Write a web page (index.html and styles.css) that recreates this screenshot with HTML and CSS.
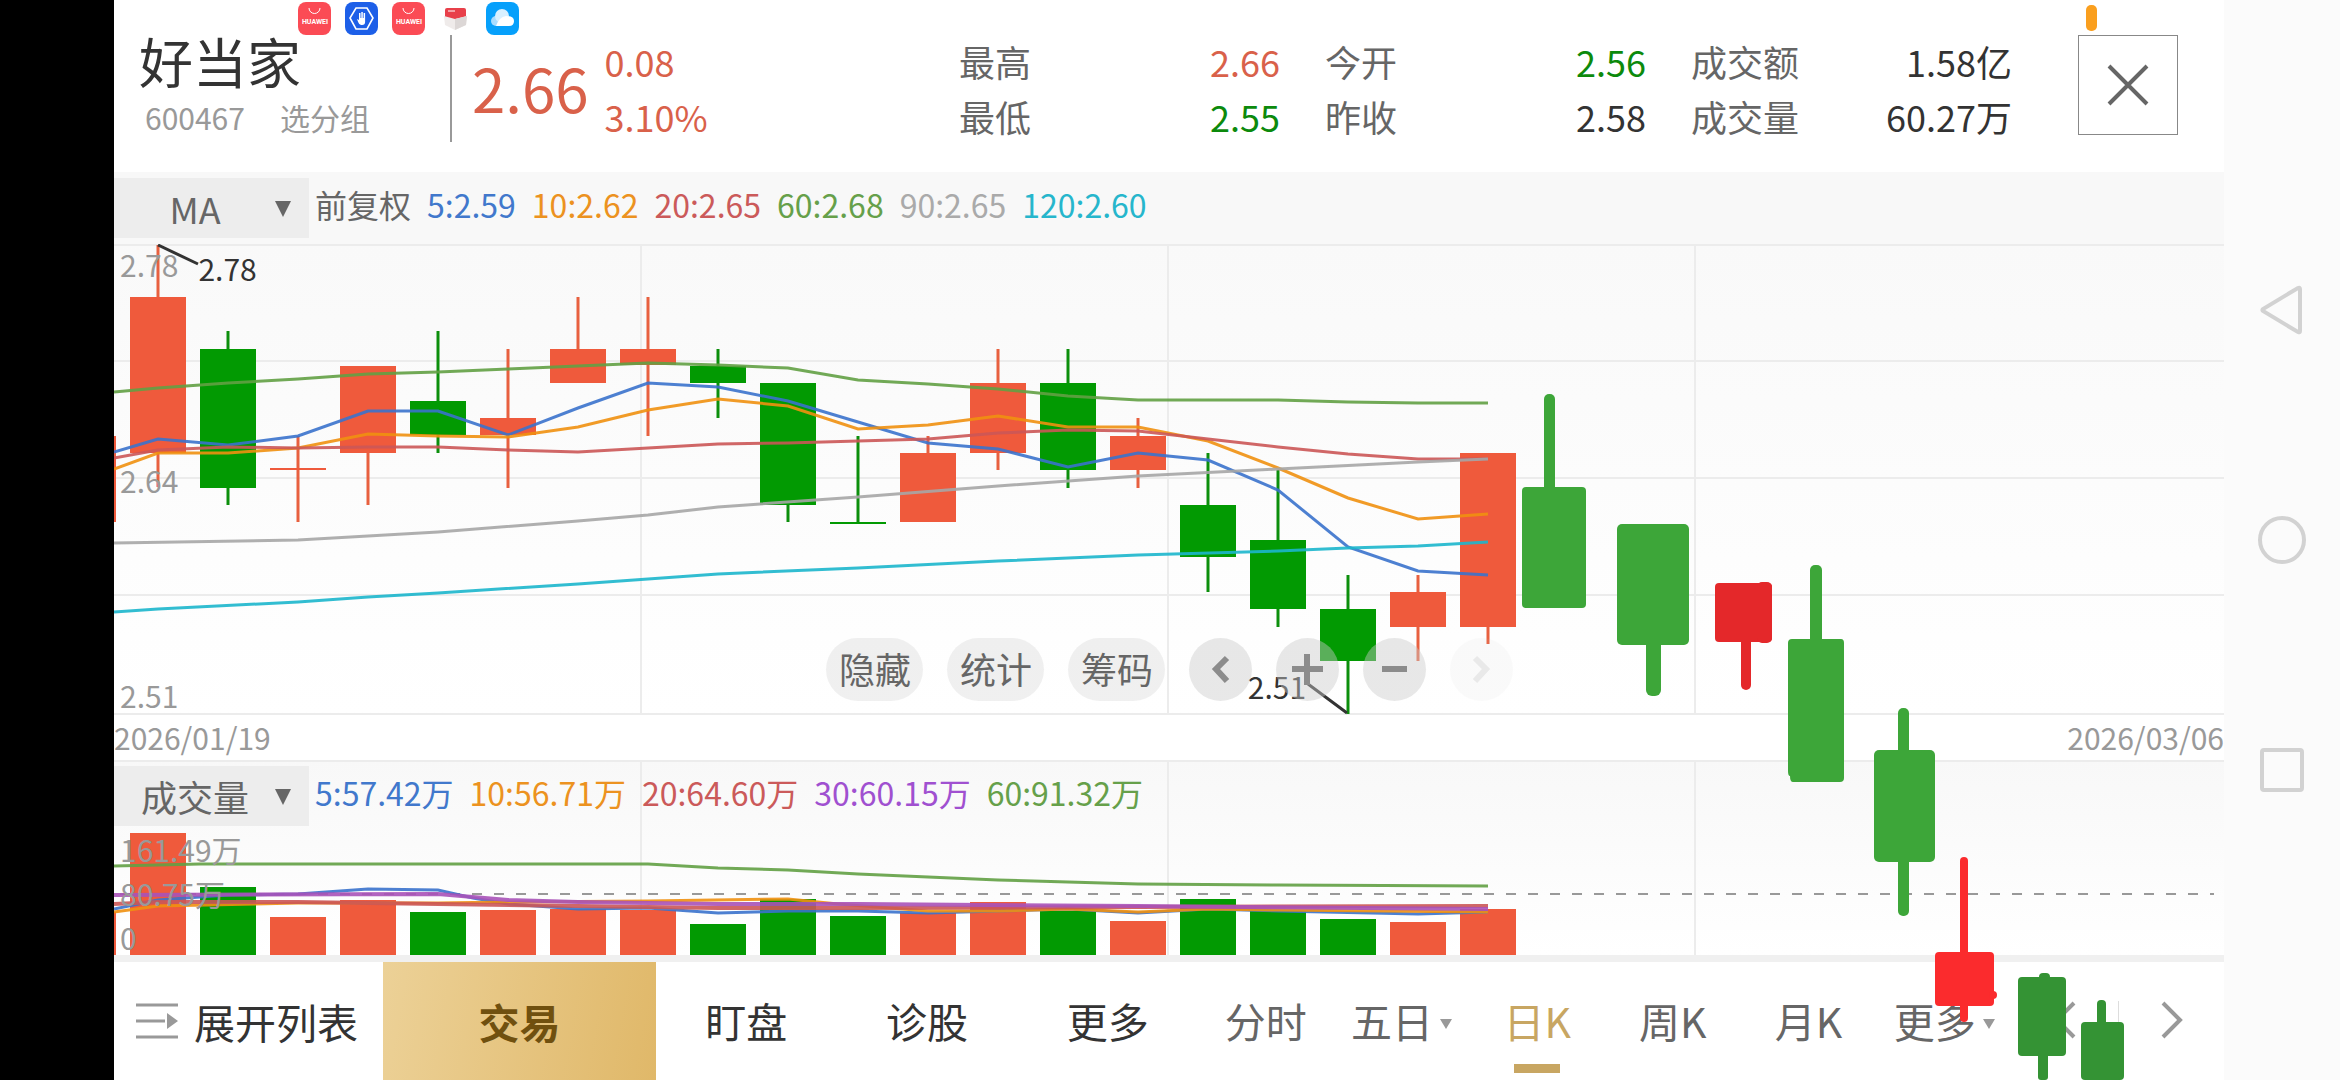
FILE: index.html
```html
<!DOCTYPE html>
<html lang="zh-CN">
<head>
    <meta charset="UTF-8">
    <meta name="viewport" content="width=device-width, initial-scale=1.0">
    <title>好当家 600467 - 日K</title>
    <link rel="stylesheet" href="styles.css">
</head>
<body>
    <div class="notch"></div>

    <main class="app">
        <!-- notificaciones del sistema -->
        <div class="status">
            <svg class="app-icon" viewBox="0 0 33 33">
                <rect width="33" height="33" rx="8" fill="#fb4b55"/>
                <path d="M11 6a5 5 0 0 0 11 0" fill="none" stroke="#fff" stroke-width="1"/>
                <text x="17" y="22" class="brand">HUAWEI</text>
            </svg>
            <svg class="app-icon" viewBox="0 0 33 33">
                <rect width="33" height="33" rx="8" fill="#1d5fe8"/>
                <path d="M11 6h11l6 10-6 11H11L5 16z" fill="none" stroke="#fff" stroke-width="1.6"/>
                <path d="M12 17l2 1v-7h1.500v5h.8v-6h1.500v6h.8v-5h1.500v9q0 3-3 3h-1q-2 0-3-3z" fill="#fff"/>
            </svg>
            <svg class="app-icon" viewBox="0 0 33 33">
                <rect width="33" height="33" rx="8" fill="#fb4b55"/>
                <path d="M11 6a5 5 0 0 0 11 0" fill="none" stroke="#fff" stroke-width="1"/>
                <text x="17" y="22" class="brand">HUAWEI</text>
            </svg>
            <svg class="app-icon" viewBox="0 0 33 33">
                <path d="M6 8q0-2 2-2h17q2 0 2 2v9H6z" fill="#e8404a"/>
                <path d="M5 14l11 3 12-3-1 9-11 5-10-5z" fill="#efebea"/>
                <path d="M16 17l12-3-1 9-11 5z" fill="#dcd7d6"/>
                <path d="M9 9h7" stroke="#fff" stroke-width="1"/>
            </svg>
            <svg class="app-icon" viewBox="0 0 33 33">
                <rect width="33" height="33" rx="8" fill="#06a0fb"/>
                <circle cx="10" cy="19" r="5" fill="#a9dcff"/>
                <circle cx="16" cy="14" r="7" fill="#d8f0ff"/>
                <path d="M10 24q3-9 10-10 8 0 8 5t-5 5z" fill="#fff"/>
            </svg>
        </div>
        <span class="mic-pill"></span>

        <header class="header">
            <div class="stock">
                <h1>好当家</h1>
                <p><span>600467</span><span>选分组</span></p>
            </div>
            <div class="price">
                <strong>2.66</strong>
                <div class="change"><span>0.08</span><span>3.10%</span></div>
            </div>
            <dl class="quotes">
                <div><dt>最高</dt><dd class="up">2.66</dd></div>
                <div><dt>今开</dt><dd class="down">2.56</dd></div>
                <div><dt>成交额</dt><dd>1.58亿</dd></div>
                <div><dt>最低</dt><dd class="down">2.55</dd></div>
                <div><dt>昨收</dt><dd>2.58</dd></div>
                <div><dt>成交量</dt><dd>60.27万</dd></div>
            </dl>
            <button class="close" type="button" aria-label="关闭">
                <svg width="42" height="42" viewBox="0 0 42 42"><path d="M2 2l38 38M40 2L2 40" stroke="#666" stroke-width="4"/></svg>
            </button>
        </header>

        <section class="indicator">
            <div class="picker">
                <select aria-label="主图指标"><option>MA</option></select>
                <svg width="16" height="16" viewBox="0 0 16 16"><path d="M0 0h16L8 16z" fill="#666"/></svg>
            </div>
            <span class="adjust">前复权</span>
            <span class="blue">5:2.59</span>
            <span class="orange">10:2.62</span>
            <span class="red">20:2.65</span>
            <span class="green">60:2.68</span>
            <span class="gray">90:2.65</span>
            <span class="cyan">120:2.60</span>
        </section>

        <section class="chart">
            <svg class="plot" viewBox="114 244 2110 471" preserveAspectRatio="none">
                <path class="grid" d="M114 245h2110M114 361h2110M114 478h2110M114 595h2110M114 714h2110M641 244v470M1168 244v470M1695 244v470"/>

                <!-- velas: mechas y cuerpos -->
                <path class="wick-up" d="M158 245v242M298 436v86M368 453v52M508 349v139M578 297v52M648 297v139M928 436v20M998 349v121M1138 418v70M1418 575v86M1488 600v44"/>
                <path class="wick-down" d="M228 331v174M438 331v122M718 349v69M788 500v22M858 436v87M1068 349v139M1208 453v139M1278 470v157M1348 575v139"/>
                <path class="up-fill" d="M60 436h56v86h-56zM130 297h56v156h-56zM270 468h56v2h-56zM340 366h56v87h-56zM480 418h56v17h-56zM550 349h56v34h-56zM620 349h56v16h-56zM900 453h56v69h-56zM970 383h56v70h-56zM1110 436h56v34h-56zM1390 592h56v35h-56zM1460 453h56v174h-56z"/>
                <path class="down-fill" d="M200 349h56v139h-56zM410 401h56v34h-56zM690 366h56v17h-56zM760 383h56v122h-56zM830 522h56v2h-56zM1040 383h56v87h-56zM1180 505h56v52h-56zM1250 540h56v69h-56zM1320 609h56v52h-56z"/>

                <g class="lines">
                    <polyline class="l60" points="114,392 158,388 228,383 298,379 368,374 438,372 508,369 578,366 648,363 718,365 788,368 858,380 928,384 998,389 1068,396 1138,400 1208,400 1278,400 1348,402 1418,403 1488,403"/>
                    <polyline class="l5" points="114,452 158,439 228,445 298,436 368,411 438,411 508,435 578,408 648,383 718,387 788,401 858,422 928,443 998,449 1068,467 1138,453 1208,460 1278,490 1348,547 1418,571 1488,575"/>
                    <polyline class="l10" points="114,469 158,453 228,453 298,448 368,434 438,436 508,437 578,427 648,410 718,399 788,406 858,429 928,425 998,416 1068,427 1138,427 1208,441 1278,468 1348,498 1418,519 1488,514"/>
                    <polyline class="l20" points="114,458 158,450 228,447 298,448 368,447 438,447 508,450 578,452 648,448 718,444 788,443 858,441 928,439 998,433 1068,430 1138,431 1208,439 1278,447 1348,454 1418,459 1488,459"/>
                    <polyline class="l90" points="114,543 298,540 438,532 578,521 648,515 718,507 858,497 998,486 1138,476 1278,469 1418,462 1488,459"/>
                    <polyline class="l120" points="114,612 158,609 298,602 368,597 438,593 578,584 718,574 858,568 998,561 1138,555 1278,551 1348,548 1418,546 1488,542"/>
                </g>
                <path class="pointer" d="M158 245l40 19M1308 684l39 29"/>
            </svg>
            <span class="axis axis-top">2.78</span>
            <span class="axis axis-mid">2.64</span>
            <span class="axis axis-low">2.51</span>
            <span class="mark mark-high">2.78</span>
            <span class="mark mark-low">2.51</span>

            <div class="tools">
                <button class="pill" type="button">隐藏</button>
                <button class="pill" type="button">统计</button>
                <button class="pill" type="button">筹码</button>
                <button class="round" type="button" aria-label="左移"><svg viewBox="0 0 63 63"><path d="M38 20L27 31l11 12" class="tool-line"/></svg></button>
                <button class="round" type="button" aria-label="放大"><svg viewBox="0 0 63 63"><path d="M16 31h31M31 16v31" class="tool-line"/></svg></button>
                <button class="round" type="button" aria-label="缩小"><svg viewBox="0 0 63 63"><path d="M19 31h25" class="tool-line"/></svg></button>
                <button class="round" type="button" aria-label="右移" disabled><svg viewBox="0 0 63 63"><path d="M25 20l11 11-11 12" class="tool-line"/></svg></button>
            </div>
        </section>

        <div class="dates"><time>2026/01/19</time><time>2026/03/06</time></div>

        <section class="volume">
            <svg class="plot" viewBox="114 760 2110 195" preserveAspectRatio="none">
                <path class="grid" d="M114 761h2110M641 760v195M1168 760v195M1695 760v195"/>
                <path d="M120 894h2094" class="dashes"/>
                <path class="up-fill" d="M60 912h56v43h-56zM130 833h56v122h-56zM270 917h56v38h-56zM340 900h56v55h-56zM480 910h56v45h-56zM550 909h56v46h-56zM620 910h56v45h-56zM900 913h56v42h-56zM970 902h56v53h-56zM1110 921h56v34h-56zM1390 922h56v33h-56zM1460 909h56v46h-56z"/>
                <path class="down-fill" d="M200 887h56v68h-56zM410 912h56v43h-56zM690 924h56v31h-56zM760 899h56v56h-56zM830 916h56v39h-56zM1040 911h56v44h-56zM1180 899h56v56h-56zM1250 911h56v44h-56zM1320 919h56v36h-56z"/>
                <g class="lines">
                    <polyline class="l60" points="114,866 200,864 648,864 718,868 788,870 858,874 928,877 998,880 1068,882 1138,884 1278,885 1488,886"/>
                    <polyline class="l5" points="114,909 158,900 228,895 298,894 368,889 438,890 473,898 508,904 578,909 648,908 718,913 788,911 858,911 928,913 998,911 1068,909 1138,913 1208,909 1278,911 1418,914 1488,912"/>
                    <polyline class="l10" points="114,912 158,906 298,903 438,903 508,902 648,901 788,899 838,904 928,911 998,911 1068,909 1138,912 1208,909 1278,910 1488,912"/>
                    <polyline class="l20" points="114,904 158,902 298,902 438,904 578,906 718,908 858,908 1138,907 1488,906"/>
                    <polyline class="l30" points="114,895 438,894 508,900 578,902 718,904 858,904 1138,906 1488,909"/>
                </g>
            </svg>
            <div class="indicator vol-indicator">
                <div class="picker">
                    <select aria-label="副图指标"><option>成交量</option></select>
                    <svg width="16" height="16" viewBox="0 0 16 16"><path d="M0 0h16L8 16z" fill="#666"/></svg>
                </div>
                <span class="blue">5:57.42万</span>
                <span class="orange">10:56.71万</span>
                <span class="red">20:64.60万</span>
                <span class="purple">30:60.15万</span>
                <span class="green">60:91.32万</span>
            </div>
            <div class="vol-axis"><span>161.49万</span><span>80.75万</span><span>0</span></div>
        </section>

        <footer class="footer">
            <button class="expand" type="button">
                <svg width="42" height="36" viewBox="0 0 42 36"><path d="M0 2h42M0 18h29M0 34h42" stroke="#999" stroke-width="3"/><path d="M31 10l11 8-11 8z" fill="#999"/></svg>
                展开列表
            </button>
            <button class="trade" type="button">交易</button>
            <nav class="actions">
                <a href="#">盯盘</a>
                <a href="#">诊股</a>
                <a href="#">更多</a>
            </nav>
            <nav class="periods">
                <a href="#">分时</a>
                <a href="#">五日<i></i></a>
                <a href="#" class="active">日K</a>
                <a href="#">周K</a>
                <a href="#">月K</a>
                <a href="#">更多<i></i></a>
            </nav>
            <div class="arrows">
                <button type="button" aria-label="上一只"><svg width="24" height="38" viewBox="0 0 24 38"><path d="M21 2L4 19l17 17" class="arrow-line"/></svg></button>
                <button type="button" aria-label="下一只"><svg width="24" height="38" viewBox="0 0 24 38"><path d="M3 2l17 17L3 36" class="arrow-line"/></svg></button>
            </div>
        </footer>
    </main>

    <aside class="sysnav">
        <button type="button" aria-label="返回"><svg width="50" height="50" viewBox="0 0 50 50"><path d="M43 4v42q0 2-2 1L6 26q-1-1 0-2L41 3q2-1 2 1z"/></svg></button>
        <button type="button" aria-label="主页"><svg width="50" height="50" viewBox="0 0 50 50"><circle cx="25" cy="25" r="22"/></svg></button>
        <button type="button" aria-label="最近任务"><svg width="50" height="50" viewBox="0 0 50 50"><rect x="5" y="5" width="40" height="40" rx="2"/></svg></button>
    </aside>

    <!-- velas dibujadas a mano encima de la pantalla -->
    <svg class="drawing" viewBox="0 0 2340 1080" preserveAspectRatio="none">
        <g fill="#3da639">
            <rect x="1544" y="394" width="11" height="100" rx="5"/><rect x="1522" y="487" width="64" height="121" rx="4"/>
            <rect x="1646" y="630" width="15" height="66" rx="6"/><rect x="1617" y="524" width="72" height="121" rx="5"/>
            <rect x="1810" y="565" width="12" height="90" rx="5"/><path d="M1792 639h49q3 0 3 4v135q0 4-4 4h-47q-3 0-3-6-2 0-2-5V643q0-4 4-4z"/>
            <rect x="1898" y="708" width="11" height="208" rx="5"/><rect x="1874" y="750" width="61" height="112" rx="5"/>
        </g>
        <g fill="#e4282a">
            <rect x="1741" y="620" width="10" height="70" rx="5"/><rect x="1715" y="583" width="57" height="59" rx="4"/><rect x="1757" y="582" width="15" height="61" rx="5"/>
        </g>
        <g fill="#fb2b2d">
            <rect x="1960" y="857" width="8" height="165" rx="4"/><rect x="1935" y="952" width="59" height="54" rx="4"/><circle cx="1993" cy="995" r="4"/>
        </g>
        <g fill="#349334">
            <rect x="2039" y="973" width="11" height="20" rx="4"/><rect x="2038" y="1040" width="10" height="40" rx="3"/><rect x="2018" y="977" width="48" height="79" rx="4"/>
            <rect x="2097" y="1000" width="9" height="40" rx="4"/><rect x="2081" y="1022" width="43" height="58" rx="4"/>
        </g>
    </svg>
</body>
</html>
```
FILE: styles.css
```css
* {
    box-sizing: border-box;
}

body {
    margin: 0;
    min-height: 100vh;
    display: flex;
    position: relative;
    background-color: #fff;
    color: #333;
    font-family: "Noto Sans CJK SC", "Noto Sans", sans-serif;
    font-size: 32px;
    line-height: 40px;
}

button,
select {
    font: inherit;
    color: inherit;
    border: none;
    padding: 0;
    margin: 0;
    background: none;
    cursor: pointer;
}

a {
    color: inherit;
    text-decoration: none;
}

h1,
p,
dl,
dd {
    margin: 0;
}

svg {
    display: block;
}

.notch {
    flex: 0 0 114px;
    background-color: #000;
}

.app {
    flex: 1;
    min-width: 0;
    display: flex;
    flex-direction: column;
    position: relative;
}

/* barra de estado */
.status {
    position: absolute;
    top: 2px;
    left: 184px;
    display: flex;
    gap: 14px;
}

.app-icon {
    width: 33px;
    height: 33px;
}

.brand {
    font-family: Roboto, sans-serif;
    font-size: 7px;
    font-weight: bold;
    fill: #fff;
    text-anchor: middle;
}

.mic-pill {
    position: absolute;
    top: 5px;
    right: 127px;
    width: 11px;
    height: 26px;
    border-radius: 5px;
    background-color: #fa9f1e;
}

/* cabecera */
.header {
    display: flex;
    height: 172px;
    padding: 35px 46px 0 25px;
}

.stock {
    width: 313px;
    height: 107px;
    border-right: 2px solid #999;
}

.stock h1 {
    font-size: 54px;
    font-weight: normal;
    line-height: 52px;
}

.stock p {
    display: flex;
    gap: 35px;
    padding: 10px 0 0 6px;
    color: #999;
    font-size: 30px;
}

.price {
    display: flex;
    gap: 16px;
    flex: 1;
    padding-left: 20px;
    color: #d9614a;
}

.price strong {
    font-size: 60px;
    font-weight: normal;
    line-height: 104px;
}

.change {
    display: grid;
    grid-auto-rows: 55px;
    font-size: 36px;
    line-height: 52px;
}

.quotes {
    flex: 0 0 1053px;
    display: grid;
    grid-template-columns: repeat(3, 1fr);
    grid-auto-rows: 55px;
    column-gap: 45px;
    font-size: 36px;
    line-height: 52px;
}

.quotes div {
    display: flex;
    justify-content: space-between;
}

.quotes dt {
    color: #666;
}

.up {
    color: #d9614a;
}

.down {
    color: #0c8a0c;
}

.close {
    width: 100px;
    height: 100px;
    margin-left: 66px;
    display: flex;
    align-items: center;
    justify-content: center;
    border: 1px solid #888;
}

/* indicadores */
.indicator {
    display: flex;
    gap: 16px;
    height: 72px;
    padding-top: 6px;
    background-color: #f8f8f8;
    line-height: 53px;
}

.picker {
    position: relative;
    flex: 0 0 195px;
    height: 60px;
    margin-right: -10px;
    background-color: #ededed;
}

.picker select {
    width: 100%;
    height: 60px;
    padding: 0 33px 0 0;
    appearance: none;
    color: #666;
    font-size: 36px;
    text-align: center;
}

.picker svg {
    position: absolute;
    top: 23px;
    right: 18px;
    pointer-events: none;
}

.adjust { color: #666; }
.blue { color: #4178cc; }
.orange { color: #ec9220; }
.red { color: #cb5a5a; }
.green { color: #66a04a; }
.gray { color: #aaa; }
.cyan { color: #26b6cc; }
.purple { color: #a050d0; }

/* velas */
.chart {
    position: relative;
    flex: 1 0 471px;
    background-image: linear-gradient(#f9f9f9, #fff);
}

.plot {
    position: absolute;
    width: 100%;
    height: 100%;
}

.grid {
    stroke: #ececec;
    stroke-width: 2;
}

.wick-up { stroke: #e8603f; stroke-width: 3; }
.wick-down { stroke: #0c8f0c; stroke-width: 3; }
.up-fill { fill: #ef5a3c; }
.down-fill { fill: #029a02; }

.lines {
    fill: none;
    stroke-width: 3;
    stroke-opacity: 0.9;
}

.l5 { stroke: #3a72cc; }
.l10 { stroke: #f09010; }
.l20 { stroke: #cb5656; }
.l30 { stroke: #a852b8; }
.l60 { stroke: #62a044; }
.l90 { stroke: #a6a6a6; }
.l120 { stroke: #1cb6cc; }

.volume .l20,
.volume .l30 {
    stroke-width: 4;
}

.pointer {
    stroke: #333;
    stroke-width: 3;
}

.axis,
.mark {
    position: absolute;
    font-size: 30px;
    line-height: 30px;
}

.axis {
    left: 6px;
    color: #999;
}

.axis-top { top: 1%; }
.axis-mid { top: 47%; }
.axis-low { bottom: 1%; }
.mark-high { left: 4%; top: 2%; }
.mark-low { right: 43.5%; bottom: 3%; }

.tools {
    position: absolute;
    left: 34%;
    bottom: 14px;
    display: flex;
    gap: 24px;
    margin-left: -5px;
}

.pill,
.round {
    height: 63px;
    border-radius: 32px;
    background-color: rgba(203, 203, 203, 0.44);
}

.pill {
    width: 97px;
    padding-bottom: 3px;
    background-color: rgba(220, 220, 220, 0.44);
    color: #666;
    font-size: 36px;
}

.round {
    width: 63px;
}

.round:disabled {
    opacity: 0.18;
}

.tool-line {
    fill: none;
    stroke: #8c8c8c;
    stroke-width: 6;
}

.dates {
    display: flex;
    justify-content: space-between;
    height: 45px;
    color: #999;
    font-size: 30px;
    line-height: 45px;
}

/* volumen */
.volume {
    position: relative;
    height: 195px;
    background-image: linear-gradient(#f8f8f8, #fff);
}

.vol-indicator {
    position: relative;
    background: none;
}

.vol-axis {
    position: absolute;
    left: 6px;
    bottom: -4px;
    display: flex;
    flex-direction: column;
    color: #999;
    font-size: 30px;
    line-height: 44px;
}

.dashes {
    stroke: #999;
    stroke-width: 2;
    stroke-dasharray: 10 12;
}

/* barra inferior */
.footer {
    display: flex;
    height: 125px;
    border-top: 7px solid #f0f0f0;
    font-size: 41px;
}

.expand {
    flex: 0 0 269px;
    display: flex;
    align-items: center;
    gap: 16px;
    padding-left: 22px;
    white-space: nowrap;
}

.trade {
    flex: 0 0 273px;
    background-image: linear-gradient(100deg, #ecd197, #e0b869);
    color: #70500f;
    font-weight: bold;
}

.actions,
.periods {
    display: grid;
    align-items: center;
    text-align: center;
}

.actions {
    flex: 542;
    grid-template-columns: repeat(3, 1fr);
}

.periods {
    flex: 814;
    grid-template-columns: repeat(6, 1fr);
    color: #666;
}

.actions a,
.periods a {
    position: relative;
    height: 118px;
    line-height: 116px;
}

.periods i {
    display: inline-block;
    margin: 0 0 9px 7px;
    border: 6px solid transparent;
    border-top: 10px solid #999;
    border-bottom: none;
}

.periods .active {
    color: #c8a662;
}

.periods .active::after {
    content: "";
    position: absolute;
    left: 50%;
    bottom: 7px;
    width: 46px;
    height: 9px;
    margin-left: -23px;
    background-color: #c8a662;
}

.arrows {
    flex: 0 0 212px;
    display: grid;
    grid-template-columns: 1fr 1fr;
    align-items: center;
}

.arrows button {
    display: flex;
    justify-content: center;
    height: 40px;
}

.arrows button + button {
    border-left: 1px solid #ddd;
}

.arrow-line {
    fill: none;
    stroke: #999;
    stroke-width: 4;
}

/* navegación del sistema */
.sysnav {
    flex: 0 0 116px;
    display: flex;
    flex-direction: column;
    align-items: center;
    justify-content: center;
    gap: 180px;
    background-color: #fbfbfb;
}

.sysnav svg {
    fill: none;
    stroke: #d2d2d2;
    stroke-width: 4;
}

.drawing {
    position: absolute;
    inset: 0;
    width: 100%;
    height: 100%;
    pointer-events: none;
}
```
